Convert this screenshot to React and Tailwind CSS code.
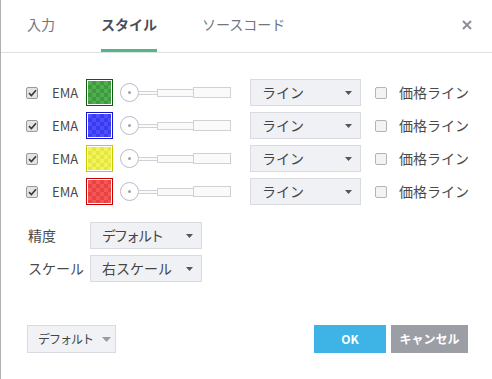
import React from 'react';

const FONT = "font-['Noto_Sans_CJK_JP','Noto_Sans',sans-serif]";

const rows = [
  { key: 'g', border: 'border-[#0d5c0d]', fill: 'bg-[repeating-conic-gradient(#3f9a3f_0_25%,#4fae4f_0_50%)]' },
  { key: 'b', border: 'border-[#1414c8]', fill: 'bg-[repeating-conic-gradient(#3a3af2_0_25%,#4d4dfa_0_50%)]' },
  { key: 'y', border: 'border-[#c9c900]', fill: 'bg-[repeating-conic-gradient(#e6e640_0_25%,#f2f25a_0_50%)]' },
  { key: 'r', border: 'border-[#c80000]', fill: 'bg-[repeating-conic-gradient(#e84242_0_25%,#f25656_0_50%)]' },
];

function Check({ checked }) {
  return (
    <div
      className={`w-[12px] h-[12px] rounded-[2px] border flex items-center justify-center shrink-0 ${
        checked ? 'border-[#9a9a9a] bg-[#e4e4e4]' : 'border-[#b4b4b4] bg-[#f3f3f3]'
      }`}
    >
      {checked && (
        <svg width="9" height="8" viewBox="0 0 9 8">
          <path d="M1 4.2 L3.4 6.5 L8 1.2" fill="none" stroke="#3a3a3a" strokeWidth="1.6" />
        </svg>
      )}
    </div>
  );
}

function Caret() {
  return (
    <svg width="7" height="4" viewBox="0 0 7 4" className="shrink-0">
      <path d="M0 0 H7 L3.5 4 Z" fill="#555" />
    </svg>
  );
}

function Select({ label, width, tight }) {
  return (
    <div
      className={`${width} h-[27px] shrink-0 flex items-center justify-between pl-[11px] pr-[8px] bg-[#f0f1f5] border border-[#d9dbe1] text-[14px] text-[#444] whitespace-nowrap`}
    >
      <span className={tight ? 'tracking-[-2px]' : ''}>{label}</span>
      <Caret />
    </div>
  );
}

function Slider() {
  return (
    <div className="ml-[7px] w-[112px] flex items-center shrink-0">
      <div className="w-[19px] h-[19px] rounded-full border border-[#b8bbc4] bg-white flex items-center justify-center shrink-0">
        <div className="w-[3px] h-[3px] rounded-full bg-[#9ea2ab]" />
      </div>
      <div className="w-[20px] h-[4px] -ml-px border border-[#cfd1d6] bg-[#fafafa]" />
      <div className="w-[37px] h-[8px] -ml-px border border-[#cfd1d6] bg-[#fafafa]" />
      <div className="w-[38px] h-[11px] -ml-px border border-[#cfd1d6] bg-[#fafafa]" />
    </div>
  );
}

export default function App() {
  return (
    <div className={`${FONT} w-[492px] h-[379px] bg-white border-l border-[#b0b0b0] flex flex-col`}>
      {/* Tabs */}
      <div className="h-[53px] border-b border-[#dedfe3] flex items-start pl-[26px] pr-[20px] shrink-0">
        <div className="h-[52px] flex items-center border-b-[3px] border-transparent text-[14px] text-[#707580]">
          入力
        </div>
        <div className="ml-[46px] h-[52px] flex items-center border-b-[3px] border-[#55b586] text-[14px] font-bold text-[#4a4f5a]">
          スタイル
        </div>
        <div className="ml-[45px] h-[52px] flex items-center border-b-[3px] border-transparent text-[14px] text-[#707580]">
          ソースコード
        </div>
        <div className="ml-auto h-[49px] flex items-center">
          <svg width="10" height="10" viewBox="0 0 10 10">
            <path d="M1 1 L9 9 M9 1 L1 9" stroke="#8c8f96" strokeWidth="2" />
          </svg>
        </div>
      </div>

      {/* Indicator rows */}
      <div className="pt-[26px] flex flex-col gap-[6px]">
        {rows.map(r => (
          <div key={r.key} className="h-[27px] pl-[25px] flex items-center text-[13px] text-[#4a4a4a]">
            <Check checked />
            <span className="ml-[14px] w-[34px]">EMA</span>
            <div className={`w-[27px] h-[27px] border p-px bg-white shrink-0 ${r.border}`}>
              <div className={`w-full h-full bg-[length:8px_8px] ${r.fill}`} />
            </div>
            <Slider />
            <div className="ml-[18px]">
              <Select label="ライン" width="w-[111px]" />
            </div>
            <div className="ml-[14px]">
              <Check />
            </div>
            <span className="ml-[12px] text-[14px] whitespace-nowrap">価格ライン</span>
          </div>
        ))}
      </div>

      <div className="pl-[27px] mt-[17px] flex flex-col gap-[6px] text-[14px] text-[#4a4a4a]">
        <div className="flex items-center h-[27px]">
          <span className="w-[62px]">精度</span>
          <Select label="デフォルト" width="w-[112px]" tight />
        </div>
        <div className="flex items-center h-[27px]">
          <span className="w-[62px]">スケール</span>
          <Select label="右スケール" width="w-[112px]" />
        </div>
      </div>

      {/* Footer */}
      <div className="mt-[43px] pl-[26px] pr-[24px] flex items-center h-[28px]">
        <div className="w-[89px] h-[28px] flex items-center pl-[10px] bg-[#f1f2f6] border border-[#d9dbe1] text-[12px] text-[#444] whitespace-nowrap">
          <span className="tracking-[-1px]">デフォルト</span>
          <svg width="9" height="5" viewBox="0 0 9 5" className="ml-[9px] shrink-0">
            <path d="M0 0 H9 L4.5 5 Z" fill="#9a9ca3" />
          </svg>
        </div>
        <div className="ml-auto w-[72px] h-[28px] flex items-center justify-center bg-[#3db4e5] text-white text-[12px] font-bold">
          OK
        </div>
        <div className="ml-[5px] w-[77px] h-[28px] flex items-center justify-center bg-[#9c9ea5] text-white text-[12px] font-bold whitespace-nowrap">
          キャンセル
        </div>
      </div>
    </div>
  );
}
